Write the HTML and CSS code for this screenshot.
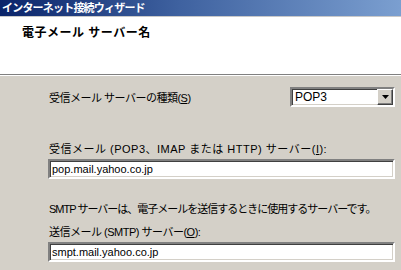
FILE: index.html
```html
<!DOCTYPE html>
<html lang="ja">
<head>
    <meta charset="UTF-8">
    <title>インターネット接続ウィザード</title>
    <link rel="stylesheet" href="styles.css">
</head>
<body>
    <div class="wizard">
        <div class="title-bar">インターネット接続ウィザード</div>
        <div class="header">
            <h1>電子メール サーバー名</h1>
        </div>
        <div class="content">
            <div class="type-row">
                <label for="serverType">受信メール サーバーの種類(<u>S</u>)</label>
                <div class="select">
                    <span class="select-value" id="serverType">POP3</span>
                    <span class="select-btn">
                        <svg width="7" height="4" viewBox="0 0 7 4"><path d="M0 0h7L3.5 4z" fill="#000"/></svg>
                    </span>
                </div>
            </div>
            <div class="field first">
                <label for="incoming" class="wide">受信メール (POP3、IMAP または HTTP) サーバー(<u>I</u>):</label>
                <input type="text" id="incoming" value="pop.mail.yahoo.co.jp">
            </div>
            <p class="note">SMTP サーバーは、電子メールを送信するときに使用するサーバーです。</p>
            <div class="field">
                <label for="outgoing" class="narrow">送信メール (SMTP) サーバー(<u>O</u>):</label>
                <input type="text" id="outgoing" value="smpt.mail.yahoo.co.jp">
            </div>
        </div>
    </div>
</body>
</html>
```

FILE: styles.css
```css
body {
    margin: 0;
    font-family: "Liberation Sans", "Noto Sans CJK JP", sans-serif;
    font-size: 11px;
    color: #000;
    background: #d4d0c8;
}
.wizard {
    width: 401px;
    height: 270px;
    display: flex;
    flex-direction: column;
    overflow: hidden;
}
.title-bar {
    height: 16px;
    line-height: 16px;
    padding-left: 2px;
    color: #fff;
    font-weight: bold;
    font-size: 11px;
    letter-spacing: -0.8px;
    white-space: nowrap;
    background: linear-gradient(to right, #0a246a, #3f62a0 45%, #7b9fd0);
    border-bottom: 1px solid #c9c9c9;
}
.header {
    height: 57px;
    background: #fff;
    border-bottom: 1px solid #808080;
    box-shadow: 0 1px 0 #fff;
}
.header h1 {
    margin: 0;
    padding: 9px 0 0 22px;
    font-size: 12px;
    font-weight: bold;
    line-height: 14px;
    letter-spacing: 0.5px;
}
.content {
    flex: 1;
    margin-top: 1px;
    padding: 11px 6px 0 48px;
}
.type-row {
    display: flex;
    align-items: center;
    justify-content: space-between;
    height: 20px;
    padding-left: 1px;
}
.type-row label {
    letter-spacing: -0.5px;
}
.select {
    display: flex;
    width: 101px;
    height: 16px;
    background: #fff;
    border: 2px solid;
    border-color: #808080 #fff #fff #808080;
    box-shadow: inset 1px 1px 0 #404040, inset -1px -1px 0 #d4d0c8;
}
.select-value {
    flex: 1;
    padding-left: 3px;
    line-height: 16px;
    font-size: 12px;
}
.select-btn {
    width: 16px;
    height: 16px;
    display: flex;
    align-items: center;
    justify-content: center;
    background: #d4d0c8;
    box-sizing: border-box;
    border: 1px solid;
    border-color: #fff #404040 #404040 #fff;
    box-shadow: inset -1px -1px 0 #808080;
}
.field label {
    display: block;
    line-height: 14px;
    padding-left: 1px;
    margin-bottom: 3px;
    white-space: nowrap;
}
.field label.wide {
    letter-spacing: 0.5px;
}
.field label.narrow {
    letter-spacing: -0.5px;
}
.field.first {
    margin-top: 35px;
}
.field input {
    display: block;
    width: 347px;
    height: 20px;
    box-sizing: border-box;
    margin: 0;
    padding: 0 2px;
    font-family: "Liberation Sans", "Noto Sans CJK JP", sans-serif;
    font-size: 11px;
    color: #000;
    background: #fff;
    border: 2px solid;
    border-color: #808080 #fff #fff #808080;
    box-shadow: inset 1px 1px 0 #404040, inset -1px -1px 0 #d4d0c8;
    outline: none;
}
.note {
    margin: 23px 0 9px;
    padding-left: 1px;
    line-height: 14px;
    letter-spacing: -1px;
    white-space: nowrap;
}
```
